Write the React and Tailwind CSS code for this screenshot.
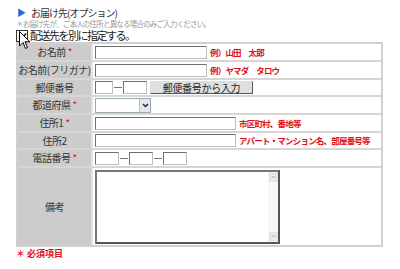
import React from "react";

const font = { fontFamily: '"Noto Sans CJK JP", "Noto Sans", sans-serif' };

const Req = () => <span className="text-[#e0101a] ml-[2px]">*</span>;

const Box = ({ w }) => (
  <div className={`h-[13px] ${w} border border-[#6f6f6f] border-r-[#bdbdbd] border-b-[#bdbdbd] bg-white`} />
);

const Dash = () => <div className="w-[8px] h-[1px] bg-[#777] mx-[1px]" />;

const Row = ({ label, req, h = "h-[18px]", children, last }) => (
  <div className={`flex ${h} ${last ? "" : "border-b-2 border-[#d6d6d6]"}`}>
    <div className="w-[75px] shrink-0 bg-[#cccccc] border-r-2 border-[#e4e4e4] flex items-center justify-center text-[10px] tracking-[-0.5px] text-[#333] whitespace-nowrap leading-none">
      {label}
      {req && <Req />}
    </div>
    <div className="flex-1 flex items-center pl-[2px] bg-white">{children}</div>
  </div>
);

const Hint = ({ children }) => (
  <span className="ml-[3px] text-[8.5px] font-bold text-[#e0101a] tracking-[-0.8px] whitespace-nowrap leading-none">{children}</span>
);

export default function App() {
  return (
    <div className="w-[400px] h-[269px] bg-white relative overflow-hidden" style={font}>
      <div className="pl-[16px] pt-[6px]">
        <div className="flex items-center h-[13px]">
          <span className="text-[#1a6fd6] text-[9px] w-[14px] ml-[1px] leading-none">▶</span>
          <span className="text-[10px] tracking-[-1px] text-[#333] leading-none">お届け先(オプション)</span>
        </div>
        <div className="flex items-center h-[9px]">
          <span className="text-[7.5px] tracking-[-0.8px] text-[#9a9a9a] leading-none whitespace-nowrap">
            ＊お届け先が、ご本人の住所と異なる場合のみご入力ください。
          </span>
        </div>
        <div className="flex items-end h-[14px]">
          <div className="w-[12px] h-[12px] border border-[#333] bg-white flex items-center justify-center">
            <svg width="9" height="9" viewBox="0 0 9 9">
              <path d="M1 4.5 L3.5 7 L8 1.5" stroke="#222" strokeWidth="1.6" fill="none" />
            </svg>
          </div>
          <span className="ml-[2px] mb-[1px] text-[11px] tracking-[-1.5px] text-[#222] leading-none">配送先を別に指定する。</span>
        </div>
        <div className="w-[367px] border-2 border-[#d0d0d0]">
          <Row label="お名前" req>
            <Box w="w-[112px]" />
            <Hint>例）山田　太郎</Hint>
          </Row>
          <Row label="お名前(フリガナ)">
            <Box w="w-[112px]" />
            <Hint>例）ヤマダ　タロウ</Hint>
          </Row>
          <Row label="郵便番号" h="h-[17px]">
            <Box w="w-[18px]" />
            <Dash />
            <Box w="w-[24px]" />
            <div className="ml-[3px] h-[13px] w-[103px] bg-[#dfdfdf] border border-[#555] border-l-[#ddd] border-t-[#ddd] text-[10px] tracking-[-0.3px] text-[#222] flex items-center justify-center leading-none">
              郵便番号から入力
            </div>
          </Row>
          <Row label="都道府県" req>
            <div className="h-[15px] w-[56px] border border-[#9aa] bg-white flex justify-end">
              <div className="w-[11px] h-full bg-[#e6e8ee] border-l border-[#b8bcc8] flex items-center justify-center">
                <svg width="7" height="5" viewBox="0 0 7 5">
                  <path d="M1 1 L3.5 3.5 L6 1" stroke="#223" strokeWidth="1.5" fill="none" />
                </svg>
              </div>
            </div>
          </Row>
          <Row label="住所1" req>
            <Box w="w-[141px]" />
            <Hint>市区町村、番地等</Hint>
          </Row>
          <Row label="住所2" h="h-[17px]">
            <Box w="w-[141px]" />
            <Hint>アパート・マンション名、部屋番号等</Hint>
          </Row>
          <Row label="電話番号" req>
            <Box w="w-[24px]" />
            <Dash />
            <Box w="w-[24px]" />
            <Dash />
            <Box w="w-[24px]" />
          </Row>
          <Row label="備考" h="h-[77px]" last>
            <div className="h-[74px] w-[185px] border-2 border-[#777] border-r-[#555] border-b-[#555] bg-white flex justify-end">
              <div className="w-[10px] h-full bg-[#f7f7f7] flex flex-col justify-between items-center py-[1px]">
                <div className="w-[9px] h-[9px] bg-[#e8ebe4] border border-[#dde] flex items-center justify-center">
                  <svg width="5" height="4" viewBox="0 0 5 4"><path d="M0.5 3 L2.5 1 L4.5 3" stroke="#aab" fill="none" /></svg>
                </div>
                <div className="w-[9px] h-[9px] bg-[#e8ebe4] border border-[#dde] flex items-center justify-center">
                  <svg width="5" height="4" viewBox="0 0 5 4"><path d="M0.5 1 L2.5 3 L4.5 1" stroke="#aab" fill="none" /></svg>
                </div>
              </div>
            </div>
          </Row>
        </div>
        <div className="mt-[2px] text-[9px] font-bold text-[#e0101a] leading-none">＊ 必須項目</div>
      </div>
      <svg className="absolute left-[19px] top-[31px]" width="12" height="19" viewBox="0 0 12 19">
        <path d="M0.5 0.5 L0.5 15 L4 11.5 L6.5 17.5 L8.5 16.5 L6 10.8 L11 10.8 Z" fill="#fff" stroke="#000" strokeWidth="1" />
      </svg>
    </div>
  );
}
